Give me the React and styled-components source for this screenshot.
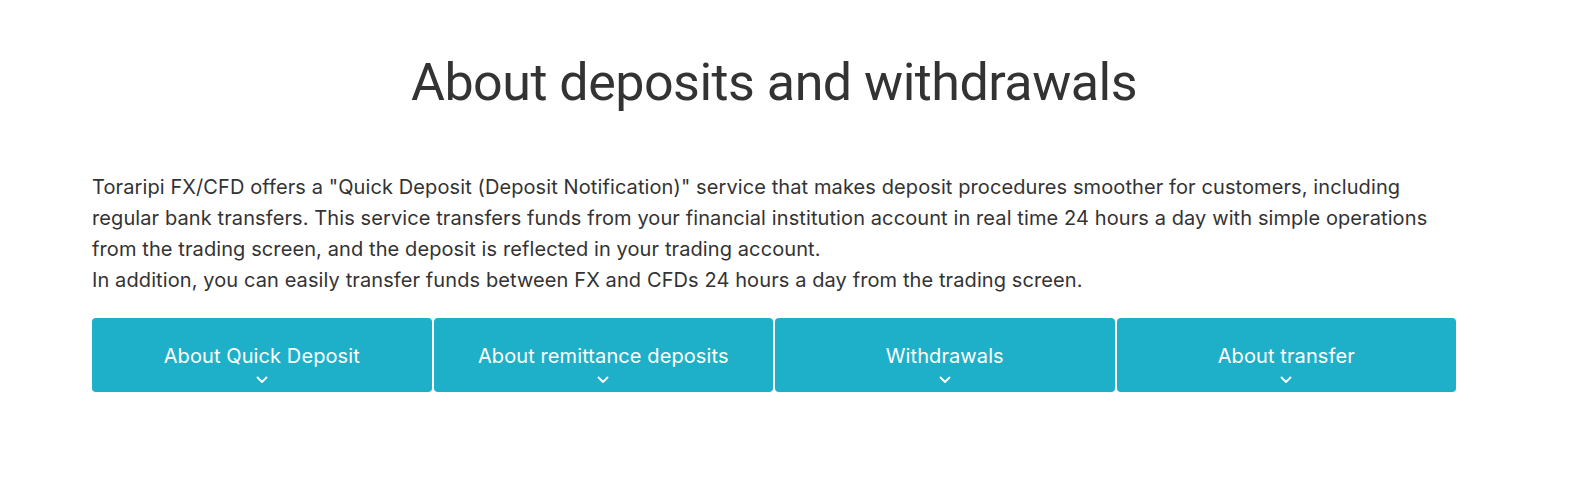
import React from 'react';
import styled, { createGlobalStyle } from 'styled-components';

const GlobalStyle = createGlobalStyle`
  body {
    margin: 0;
    background: #fff;
    font-family: Inter, "Noto Sans", sans-serif;
    color: #333;
  }
`;

const Section = styled.section`
  width: 1364px;
  margin-left: 92px;
  padding-top: 51px;
`;

const Title = styled.h2`
  margin: 0 0 57px;
  text-align: center;
  font-family: Roboto, Inter, sans-serif;
  font-size: 52px;
  font-weight: 400;
  line-height: 64px;
  letter-spacing: -0.5px;
  color: #333;
`;

const Lead = styled.p`
  margin: 0 0 22px;
  font-size: 20px;
  line-height: 31px;
  letter-spacing: 0.1px;
  color: #333;
`;

const Tabs = styled.div`
  display: grid;
  grid-template-columns: repeat(4, 1fr);
  gap: 2px;
`;

const Tab = styled.button`
  display: flex;
  flex-direction: column;
  align-items: center;
  height: 74px;
  padding: 26px 0 0;
  border: none;
  border-radius: 4px;
  background: #1fb0c9;
  color: #fff;
  font-family: inherit;
  font-size: 20px;
  line-height: 24px;
  letter-spacing: 0.1px;
  cursor: pointer;
`;

const ChevronIcon = styled.svg`
  margin-top: 8px;
`;

const Chevron = () => (
  <ChevronIcon width="12" height="8" viewBox="0 0 12 8">
    <path d="M1.5 1.5 L6 6 L10.5 1.5" fill="none" stroke="#fff" strokeWidth="1.8" strokeLinecap="round" strokeLinejoin="round" />
  </ChevronIcon>
);

const tabs = ['About Quick Deposit', 'About remittance deposits', 'Withdrawals', 'About transfer'];

export default function App() {
  return (
    <>
      <GlobalStyle />
      <Section>
        <Title>About deposits and withdrawals</Title>
        <Lead>
          Toraripi FX/CFD offers a "Quick Deposit (Deposit Notification)" service that makes deposit procedures smoother for customers, including regular bank transfers. This service transfers funds from your financial institution account in real time 24 hours a day with simple operations from the trading screen, and the deposit is reflected in your trading account.
          <br />
          In addition, you can easily transfer funds between FX and CFDs 24 hours a day from the trading screen.
        </Lead>
        <Tabs>
          {tabs.map((t) => (
            <Tab key={t}>
              {t}
              <Chevron />
            </Tab>
          ))}
        </Tabs>
      </Section>
    </>
  );
}
